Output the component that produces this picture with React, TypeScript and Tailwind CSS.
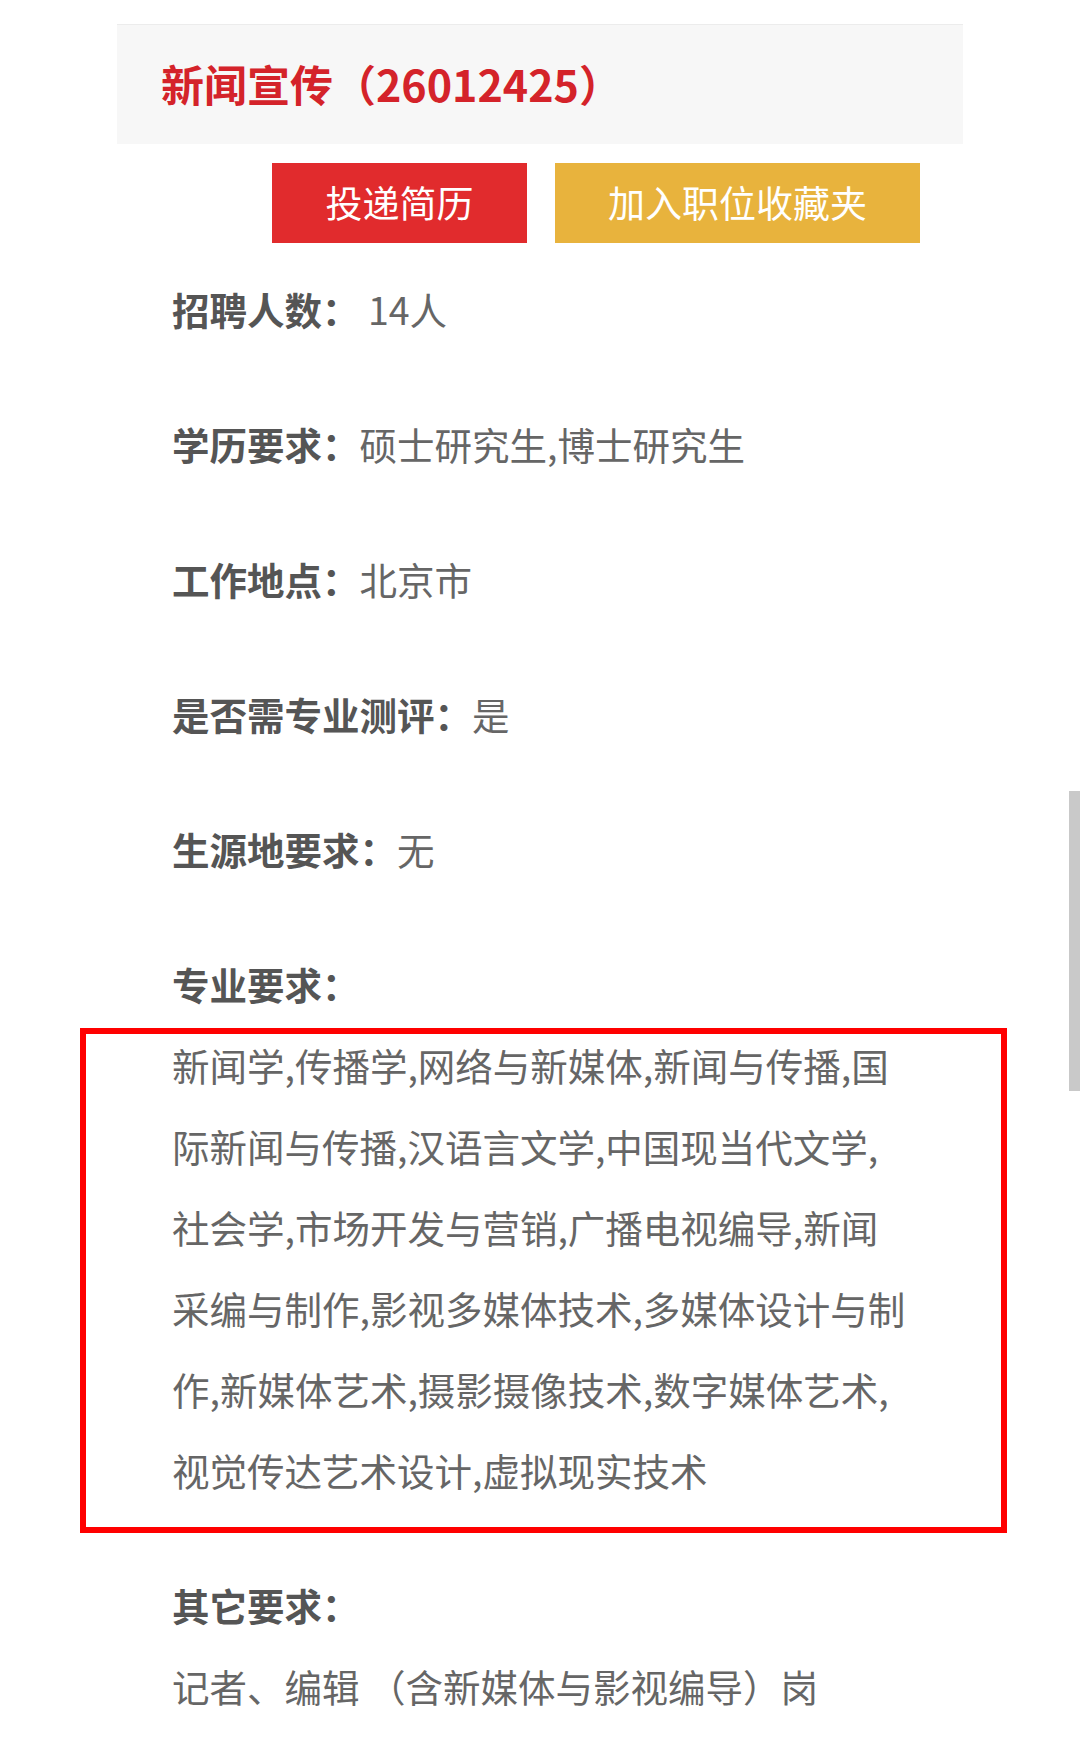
export default function App() {
  const majors = [
    '新闻学,传播学,网络与新媒体,新闻与传播,国',
    '际新闻与传播,汉语言文学,中国现当代文学,',
    '社会学,市场开发与营销,广播电视编导,新闻',
    '采编与制作,影视多媒体技术,多媒体设计与制',
    '作,新媒体艺术,摄影摄像技术,数字媒体艺术,',
    '视觉传达艺术设计,虚拟现实技术',
  ];

  const rows = [
    { label: '招聘人数：', value: '\u00a014人' },
    { label: '学历要求：', value: '硕士研究生,博士研究生' },
    { label: '工作地点：', value: '北京市' },
    { label: '是否需专业测评：', value: '是' },
    { label: '生源地要求：', value: '无' },
  ];

  return (
    <div className="relative min-h-[1740px] w-[1080px] bg-white font-['Noto_Sans_CJK_SC','Noto_Sans',sans-serif]">
      <div className="px-[117px] pt-[24px]">
        {/* Title bar */}
        <div className="flex h-[120px] items-center border-t border-[#ececec] bg-[#f7f7f7] pb-[2px] pl-[44px]">
          <h1 className="text-[43px] font-bold leading-none text-[#d4232a]">新闻宣传（26012425）</h1>
        </div>

        {/* Actions */}
        <div className="mt-[19px] flex justify-end gap-[28px] pr-[43px]">
          <button className="flex h-[80px] w-[255px] items-center justify-center bg-[#e12b2d] text-[37px] text-white">
            投递简历
          </button>
          <button className="flex h-[80px] w-[365px] items-center justify-center bg-[#e8b33d] text-[37px] text-white">
            加入职位收藏夹
          </button>
        </div>

        {/* Details */}
        <div className="mt-[25px] pl-[55px] text-[37.5px] leading-[81px] text-[#666]">
          {rows.map((r) => (
            <div key={r.label} className="mb-[54px]">
              <span className="font-bold text-[#555]">{r.label}</span>
              <span>{r.value}</span>
            </div>
          ))}

          <div className="font-bold text-[#555]">专业要求：</div>
          <div className="relative mb-[54px]">
            {majors.map((line) => (
              <div key={line}>{line}</div>
            ))}
            <div className="absolute left-[-92px] top-[4px] h-[505px] w-[927px] border-[6px] border-[#ff0000]" />
          </div>

          <div className="font-bold text-[#555]">其它要求：</div>
          <div>记者、编辑 （含新媒体与影视编导）岗</div>
        </div>
      </div>

      {/* scrollbar thumb */}
      <div className="absolute right-0 top-[791px] h-[300px] w-[11px] bg-[#c9c9c9]" />
    </div>
  );
}
